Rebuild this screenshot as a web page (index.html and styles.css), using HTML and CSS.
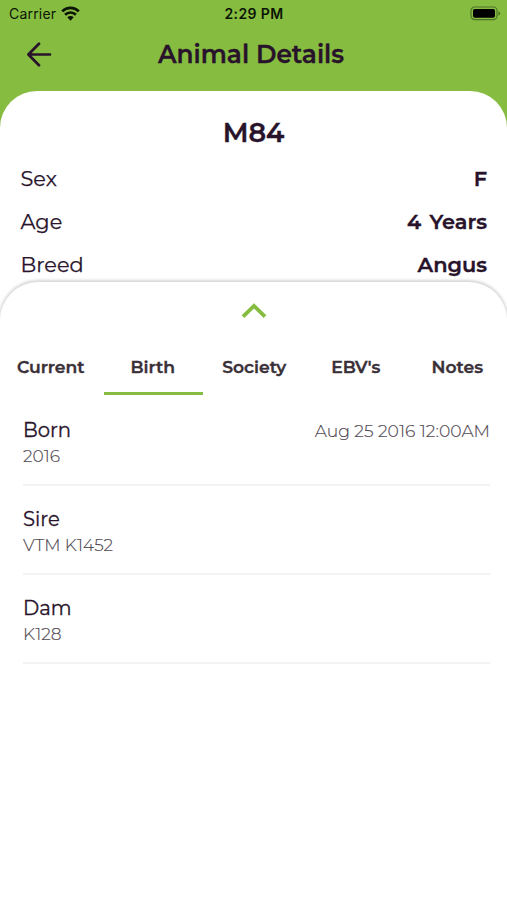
FILE: index.html
```html
<!DOCTYPE html>
<html lang="en">
<head>
<meta charset="utf-8">
<title>Animal Details</title>
<link rel="stylesheet" href="styles.css">
</head>
<body>
<div class="app">
  <div class="status">
    <div class="carrier"><span>Carrier</span>
      <svg width="19" height="15" viewBox="0 0 19 15" fill="none" stroke="#0b1405" stroke-width="2.7"><path d="M1.2 5.4a11.7 11.7 0 0 1 16.6 0M4.1 8.8a7.5 7.5 0 0 1 10.8 0"/><path d="M6.3 11.3a4.4 4.4 0 0 1 6.4 0l-3.2 3.4z" fill="#0b1405" stroke="none"/></svg>
    </div>
    <div class="time">2:29 PM</div>
    <svg class="battery" width="31" height="15" viewBox="0 0 31 15"><rect x="1" y="1" width="26" height="12.6" rx="3.6" fill="none" stroke="#50742a" stroke-width="1.2"/><rect x="3" y="3" width="22" height="8.8" rx="1.8" fill="#000"/><path d="M28.4 5.2c2.4.8 2.4 3.6 0 4.4z" fill="#50742a"/></svg>
  </div>
  <header class="bar">
    <svg class="back" width="26" height="26" viewBox="0 0 26 26" fill="none" stroke="#28132b" stroke-width="2.7" stroke-linecap="round" stroke-linejoin="round"><path d="M24 13.5H2.4M13 2.7 2.4 13.5 13 24.3"/></svg>
    <h1>Animal Details</h1>
  </header>
  <main class="card">
    <h2>M84</h2>
    <dl class="facts">
      <div><dt>Sex</dt><dd>F</dd></div>
      <div><dt>Age</dt><dd>4 Years</dd></div>
      <div><dt>Breed</dt><dd>Angus</dd></div>
    </dl>
    <section class="sheet">
      <svg class="chevron" width="26" height="18" viewBox="0 0 26 18" fill="none" stroke="#86bd41" stroke-width="3.8"><path d="M2 15.6 13 4.8l11 10.8"/></svg>
      <nav class="tabs">
        <a class="tab">Current</a>
        <a class="tab active">Birth</a>
        <a class="tab">Society</a>
        <a class="tab">EBV's</a>
        <a class="tab">Notes</a>
      </nav>
      <ul class="list">
        <li><div><b>Born</b><small>2016</small></div><time>Aug 25 2016 12:00AM</time></li>
        <li><div><b>Sire</b><small>VTM K1452</small></div></li>
        <li><div><b>Dam</b><small>K128</small></div></li>
      </ul>
    </section>
  </main>
</div>
</body>
</html>
```
FILE: styles.css
```css
* { box-sizing: border-box; margin: 0; padding: 0; }
body { background: #86bd41; color: #28132b; font-family: Montserrat, Inter, "Open Sans", sans-serif; }
.app { width: 507px; height: 900px; overflow: hidden; display: flex; flex-direction: column; }
svg { display: block; flex: none; }

.status { height: 28px; display: grid; grid-template-columns: 1fr auto 1fr; align-items: center; padding: 0 6px 0 9px; color: #0b1405; font: 14px/28px Inter, sans-serif; }
.carrier { display: flex; align-items: center; gap: 5px; letter-spacing: .2px; }
.carrier svg { margin-top: -2px; }
.time { font-weight: 600; letter-spacing: .4px; margin-left: -2px; }
.battery { justify-self: end; margin-top: -2px; }

.bar { height: 63px; display: grid; grid-template-columns: 26px 1fr 26px; align-items: center; padding: 0 31px 11px 26px; }
h1, h2, .facts dd, .tab { -webkit-text-stroke: .35px currentColor; }
h1 { text-align: center; font-size: 24.8px; line-height: 30px; font-weight: 600; }

.card { flex: 1; background: #fff; border-radius: 37px 37px 0 0; padding-top: 25px; display: flex; flex-direction: column; }
h2 { text-align: center; font-size: 27px; line-height: 34px; font-weight: 600; }
.facts { padding: 8px 20px 0 20.5px; height: 132px; }
.facts div { display: flex; justify-content: space-between; height: 43px; line-height: 42px; font-size: 20.9px; }
.facts dt { font-weight: 400; -webkit-text-stroke: .25px currentColor; }
.facts dd { font-weight: 600; word-spacing: 2.5px; }

.sheet { flex: 1; background: #fff; border-radius: 38px 38px 0 0; box-shadow: 0 -1px 3px 1px #d6d6d6; padding-top: 19px; }
.chevron { margin: 0 auto; }
.tabs { display: grid; grid-template-columns: repeat(5, 101.5px); margin-top: 19px; height: 57px; }
.tab { text-align: center; line-height: 57px; font-size: 17.2px; font-weight: 600; color: #3a3038; }
.tab:not(:first-child) { padding-left: 1px; }
.tab.active { background: linear-gradient(#86bd41, #86bd41) 2px 100% / 100px 3px no-repeat; }
.list { list-style: none; padding: 0 17px 0 23px; }
.list li { display: flex; justify-content: space-between; height: 89px; padding-top: 19px; border-bottom: 2px solid #f4f3f4; }
.list li:first-child { height: 91px; padding-top: 21px; }
.list b { display: block; font-weight: 400; font-size: 19.6px; line-height: 28px; -webkit-text-stroke: .3px currentColor; }
.list small { display: block; font-size: 17px; line-height: 24px; font-weight: 300; color: #504852; -webkit-text-stroke: .15px currentColor; }
.list time { font-size: 17.2px; line-height: 30px; font-weight: 300; color: #504852; -webkit-text-stroke: .15px currentColor; }
```
